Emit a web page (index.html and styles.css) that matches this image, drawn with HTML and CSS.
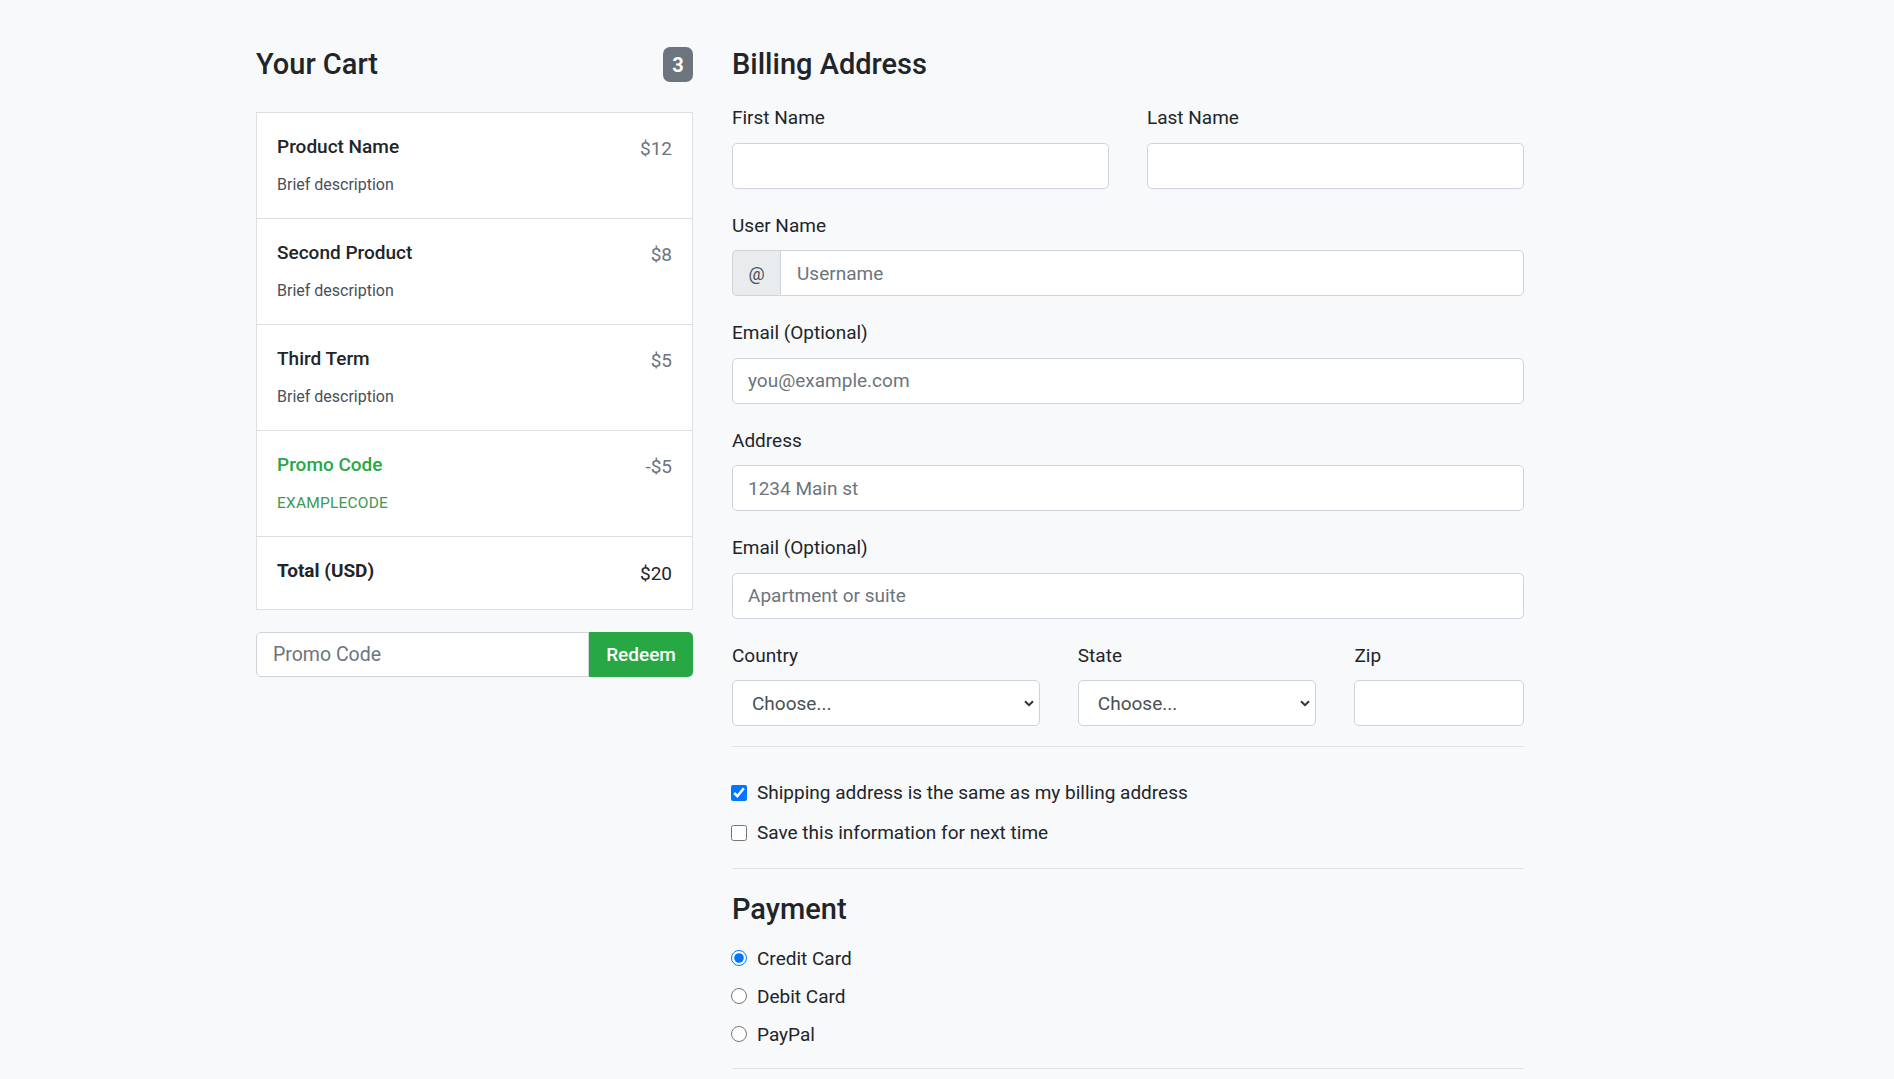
FILE: index.html
```html
<!DOCTYPE html>
<html lang="en">
<head>
<meta charset="utf-8">
<title>Checkout</title>
<link rel="stylesheet" href="styles.css">
</head>
<body>
<div class="page">
  <aside class="cart">
    <div class="cart-head">
      <h4 class="h4">Your Cart</h4>
      <span class="badge">3</span>
    </div>
    <ul class="list">
      <li class="item">
        <div>
          <h6 class="item-title">Product Name</h6>
          <small class="item-desc">Brief description</small>
        </div>
        <span class="price">$12</span>
      </li>
      <li class="item">
        <div>
          <h6 class="item-title">Second Product</h6>
          <small class="item-desc">Brief description</small>
        </div>
        <span class="price">$8</span>
      </li>
      <li class="item">
        <div>
          <h6 class="item-title">Third Term</h6>
          <small class="item-desc">Brief description</small>
        </div>
        <span class="price">$5</span>
      </li>
      <li class="item promo">
        <div>
          <h6 class="item-title">Promo Code</h6>
          <small class="item-desc code">EXAMPLECODE</small>
        </div>
        <span class="price">-$5</span>
      </li>
      <li class="item total">
        <span class="total-label">Total (USD)</span>
        <strong class="total-value">$20</strong>
      </li>
    </ul>
    <form class="promo-group">
      <input class="promo-input" type="text" placeholder="Promo Code">
      <button class="redeem" type="button">Redeem</button>
    </form>
  </aside>

  <main class="billing">
    <h4 class="h4 billing-title">Billing Address</h4>
    <div class="grid">
      <div class="field span6">
        <label class="label">First Name</label>
        <input class="control" type="text">
      </div>
      <div class="field span6">
        <label class="label">Last Name</label>
        <input class="control" type="text">
      </div>
    </div>
    <div class="field">
      <label class="label">User Name</label>
      <div class="input-group">
        <span class="addon">@</span>
        <input class="control joined" type="text" placeholder="Username">
      </div>
    </div>
    <div class="field">
      <label class="label">Email (Optional)</label>
      <input class="control" type="email" placeholder="you@example.com">
    </div>
    <div class="field">
      <label class="label">Address</label>
      <input class="control" type="text" placeholder="1234 Main st">
    </div>
    <div class="field">
      <label class="label">Email (Optional)</label>
      <input class="control" type="text" placeholder="Apartment or suite">
    </div>
    <div class="grid">
      <div class="field span5 last">
        <label class="label">Country</label>
        <div class="select-wrap">
          <select class="control select"><option>Choose...</option></select>
          <svg class="chev" width="10" height="7" viewBox="0 0 10 7"><path d="M1 1.2 L5 5.2 L9 1.2" fill="none" stroke="#333" stroke-width="2"/></svg>
        </div>
      </div>
      <div class="field span4 last">
        <label class="label">State</label>
        <div class="select-wrap">
          <select class="control select"><option>Choose...</option></select>
          <svg class="chev" width="10" height="7" viewBox="0 0 10 7"><path d="M1 1.2 L5 5.2 L9 1.2" fill="none" stroke="#333" stroke-width="2"/></svg>
        </div>
      </div>
      <div class="field span3 last">
        <label class="label">Zip</label>
        <input class="control" type="text">
      </div>
    </div>
    <hr class="rule rule-1">
    <div class="checks">
      <label class="check"><input type="checkbox" checked> Shipping address is the same as my billing address</label>
      <label class="check"><input type="checkbox"> Save this information for next time</label>
    </div>
    <hr class="rule rule-2">
    <h4 class="h4 payment-title">Payment</h4>
    <div class="radios">
      <label class="check"><input type="radio" name="pay" checked> Credit Card</label>
      <label class="check"><input type="radio" name="pay"> Debit Card</label>
      <label class="check"><input type="radio" name="pay"> PayPal</label>
    </div>
    <hr class="rule rule-3">
  </main>
</div>
</body>
</html>
```

FILE: styles.css
```css
* { box-sizing: border-box; }
html, body {
  margin: 0;
  background: #f8f9fa;
  color: #212529;
  font-family: Roboto, "Liberation Sans", Arial, sans-serif;
  font-size: 19px;
}
.page {
  display: flex;
  gap: 39px;
  padding: 47px 0 0 256px;
}
.cart { width: 437px; flex: none; }
.billing { width: 792px; flex: none; }

.h4 {
  margin: 0;
  font-size: 29px;
  line-height: 35px;
  font-weight: 500;
  color: #212529;
}
.cart-head {
  display: flex;
  justify-content: space-between;
  align-items: center;
  margin-bottom: 30px;
}
.badge {
  width: 30px;
  height: 35px;
  border-radius: 7px;
  background: #6c757d;
  color: #fff;
  font-weight: 700;
  font-size: 20px;
  display: flex;
  align-items: center;
  justify-content: center;
}
.list {
  list-style: none;
  margin: 0;
  padding: 0;
  background: #fff;
  border: 1px solid #dfdfdf;
}
.item {
  display: flex;
  justify-content: space-between;
  align-items: flex-start;
  padding: 21px 20px 22px;
  border-bottom: 1px solid #dfdfdf;
}
.item:last-child { border-bottom: 0; }
.item-title {
  margin: 0;
  font-size: 19px;
  line-height: 26px;
  font-weight: 500;
  color: #212529;
}
.item-desc {
  display: block;
  margin-top: 14px;
  font-size: 16px;
  line-height: 22px;
  color: #495057;
}
.price {
  font-size: 19px;
  line-height: 30px;
  color: #6c757d;
}
.promo .item-title { color: #28a745; }
.promo .code { color: #3c9a52; font-size: 15.5px; letter-spacing: 0.2px; }
.total { padding: 21px 20px 22px; }
.total-label { font-weight: 700; font-size: 19px; line-height: 26px; }
.total-value { font-weight: 400; font-size: 19px; line-height: 26px; margin-top: 3px; }

.promo-group {
  display: flex;
  margin-top: 22px;
  height: 45px;
}
.promo-input {
  flex: 1;
  min-width: 0;
  border: 1px solid #ced4da;
  border-radius: 5px 0 0 5px;
  background: #fff;
  padding: 0 16px;
  font: inherit;
  font-size: 19.5px;
  color: #495057;
}
.promo-input::placeholder, .control::placeholder { color: #6c757d; opacity: 1; }
.redeem {
  width: 104px;
  border: 0;
  border-radius: 0 5px 5px 0;
  background: #28a745;
  color: #fff;
  font: inherit;
  font-size: 19px;
  font-weight: 500;
}

.billing-title { margin-bottom: 22px; }
.grid {
  display: grid;
  grid-template-columns: repeat(12, 1fr);
  column-gap: 38px;
}
.span6 { grid-column: span 6; }
.span5 { grid-column: span 5; }
.span4 { grid-column: span 4; }
.span3 { grid-column: span 3; }
.field { margin-bottom: 23px; }
.field.last { margin-bottom: 0; }
.label {
  display: block;
  font-size: 19px;
  line-height: 28px;
  margin-bottom: 10.5px;
  color: #212529;
}
.control {
  display: block;
  width: 100%;
  height: 46px;
  border: 1px solid #ced4da;
  border-radius: 5px;
  background: #fff;
  padding: 0 15px;
  font: inherit;
  font-size: 19px;
  color: #495057;
}
.input-group { display: flex; }
.addon {
  width: 48px;
  height: 46px;
  flex: none;
  display: flex;
  align-items: center;
  justify-content: center;
  background: #e9ecef;
  border: 1px solid #ced4da;
  border-right: 0;
  border-radius: 5px 0 0 5px;
  color: #495057;
  font-size: 18px;
}
.control.joined { border-radius: 0 5px 5px 0; padding-left: 16px; }
.select-wrap { position: relative; }
.select {
  appearance: none;
  -webkit-appearance: none;
  padding-left: 19px;
}
.chev {
  position: absolute;
  right: 6px;
  top: 20px;
  pointer-events: none;
}
.rule {
  border: 0;
  height: 1px;
  background: #e0e2e4;
  margin: 0;
}
.rule-1 { margin-top: 20px; margin-bottom: 31px; }
.checks { display: flex; flex-direction: column; gap: 11px; }
.check {
  display: flex;
  align-items: center;
  font-size: 19px;
  line-height: 29px;
  color: #212529;
}
.check input {
  width: 16px;
  height: 16px;
  margin: 0 10px 0 -1px;
  flex: none;
}
.rule-2 { margin-top: 21px; margin-bottom: 22.5px; }
.payment-title { margin-bottom: 17px; }
.radios { display: flex; flex-direction: column; gap: 9px; }
.rule-3 { margin-top: 19px; }
```
